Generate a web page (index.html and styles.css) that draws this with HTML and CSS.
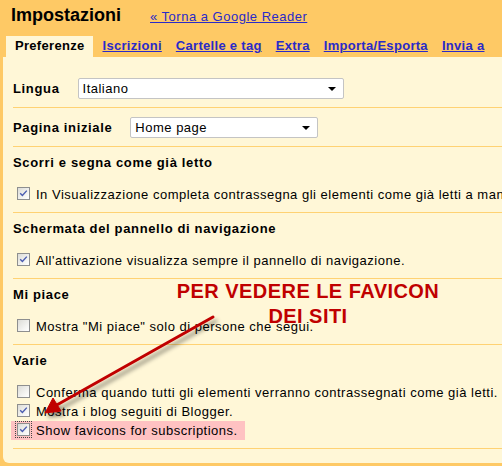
FILE: index.html
```html
<!DOCTYPE html>
<html lang="it">
<head>
    <meta charset="UTF-8">
    <meta name="viewport" content="width=device-width, initial-scale=1.0">
    <title>Impostazioni</title>
    <link rel="stylesheet" href="styles.css">
</head>
<body>
    <div class="page">
        <div class="header">
            <span class="title">Impostazioni</span>
            <a class="back-link" href="#">« Torna a Google Reader</a>
        </div>

        <div class="tabs">
            <span class="tab active">Preferenze</span>
            <a class="tab" href="#">Iscrizioni</a>
            <a class="tab" href="#">Cartelle e tag</a>
            <a class="tab" href="#">Extra</a>
            <a class="tab" href="#">Importa/Esporta</a>
            <a class="tab" href="#">Invia a</a>
        </div>

        <div class="panel">
            <div class="row select-row">
                <span class="label">Lingua</span>
                <div class="select lang-select">Italiano<span class="caret"></span></div>
            </div>
            <div class="row select-row">
                <span class="label">Pagina iniziale</span>
                <div class="select home-select">Home page<span class="caret"></span></div>
            </div>

            <div class="row section">
                <div class="label">Scorri e segna come già letto</div>
                <div class="option"><span class="check on"></span>In Visualizzazione completa contrassegna gli elementi come già letti a mano a mano che scorri.</div>
            </div>
            <div class="row section">
                <div class="label">Schermata del pannello di navigazione</div>
                <div class="option"><span class="check on"></span>All'attivazione visualizza sempre il pannello di navigazione.</div>
            </div>
            <div class="row section">
                <div class="label">Mi piace</div>
                <div class="option"><span class="check"></span>Mostra "Mi piace" solo di persone che segui.</div>
            </div>
            <div class="row section">
                <div class="label">Varie</div>
                <div class="option"><span class="check"></span>Conferma quando tutti gli elementi verranno contrassegnati come già letti.</div>
                <div class="option"><span class="check on"></span>Mostra i blog seguiti di Blogger.</div>
                <div class="option marked"><span class="check on focus"></span>Show favicons for subscriptions.</div>
            </div>
        </div>

        <div class="note">PER VEDERE LE FAVICON<br>DEI SITI</div>
        <svg class="arrow" width="502" height="466" viewBox="0 0 502 466">
            <defs>
                <filter id="shade" x="-20%" y="-20%" width="140%" height="140%">
                    <feDropShadow dx="3" dy="4" stdDeviation="2" flood-color="#000" flood-opacity="0.45"/>
                </filter>
            </defs>
            <g filter="url(#shade)" fill="#c00000" stroke="#c00000">
                <line x1="213" y1="317" x2="55" y2="406" stroke-width="3" stroke-linecap="round"/>
                <polygon points="45,413 53,398 61,411" stroke-width="1" stroke-linejoin="round"/>
            </g>
        </svg>
    </div>
</body>
</html>
```

FILE: styles.css
```css
html, body {
    margin: 0;
    overflow: hidden;
}

body {
    background: #fec965;
    font-family: "Liberation Sans", Arial, sans-serif;
    font-size: 13px;
    letter-spacing: 0.5px;
    color: #000;
}

.page {
    position: relative;
    width: 700px;
    height: 466px;
}

.header {
    display: flex;
    align-items: baseline;
    padding: 4px 0 0 11px;
}

.title {
    font-size: 18px;
    line-height: 22px;
    font-weight: bold;
    letter-spacing: 0;
}

.back-link {
    margin-left: 29px;
    line-height: 18px;
    color: #2a2ac8;
}

.tabs {
    display: flex;
    margin-top: 10px;
    padding-left: 6px;
}

.tab {
    padding: 2px 0 4px;
    line-height: 15px;
    font-weight: bold;
    letter-spacing: 0.3px;
    color: #2a2ac8;
}

.tab.active {
    padding: 2px 9px 4px;
    background: #fff7d7;
    color: #000;
}

.tab + .tab {
    margin-left: 14px;
}

.tab.active + .tab {
    margin-left: 9px;
}

.panel {
    margin-left: 3px;
    padding: 12px 0 14px 10px;
    background: #fff7d7;
    border-radius: 0 0 0 6px;
}

.row {
    border-bottom: 1px solid #ffd273;
}

.label {
    font-weight: bold;
    letter-spacing: 0.65px;
}

.select-row {
    display: flex;
    align-items: center;
    padding: 9px 0 8px;
}

.select {
    position: relative;
    box-sizing: border-box;
    height: 21px;
    margin-left: 18px;
    padding: 0 4px;
    line-height: 19px;
    background: #fff;
    border: 1px solid #c4c4c4;
    border-radius: 2px;
}

.lang-select {
    width: 266px;
}

.home-select {
    width: 188px;
}

.caret {
    position: absolute;
    right: 7px;
    top: 8px;
    border-left: 4px solid transparent;
    border-right: 4px solid transparent;
    border-top: 4px solid #000;
}

.section {
    padding: 8px 0;
}

.section .label {
    line-height: 16px;
    margin-bottom: 14px;
}

.option {
    line-height: 19px;
    white-space: nowrap;
    padding-left: 4px;
}

.option.marked {
    display: inline-block;
    margin-left: -2px;
    padding: 0 7px 0 6px;
    background: #ffc2c2;
}

.check {
    display: inline-block;
    box-sizing: border-box;
    width: 13px;
    height: 13px;
    margin-right: 6px;
    vertical-align: -1px;
    border: 1px solid #8e8f8f;
    background: linear-gradient(135deg, #dcdcd7 0%, #f6f6f4 70%, #fff 100%);
}

.check.on {
    background:
        url("data:image/svg+xml,%3Csvg xmlns='http://www.w3.org/2000/svg' width='11' height='11'%3E%3Cpath d='M2.2 5.3 L4.4 7.5 L8.8 2.6' fill='none' stroke='%234a5cb0' stroke-width='1.4'/%3E%3C/svg%3E") no-repeat center,
        linear-gradient(135deg, #dcdcd7 0%, #f6f6f4 70%, #fff 100%);
}

.check.focus {
    outline: 1px dotted #444;
    outline-offset: 1px;
}

.note {
    position: absolute;
    left: 158px;
    top: 279px;
    width: 300px;
    text-align: center;
    font-size: 20px;
    line-height: 25px;
    font-weight: bold;
    letter-spacing: 0.45px;
    color: #c00000;
}

.arrow {
    position: absolute;
    left: 0;
    top: 0;
    pointer-events: none;
}
```
